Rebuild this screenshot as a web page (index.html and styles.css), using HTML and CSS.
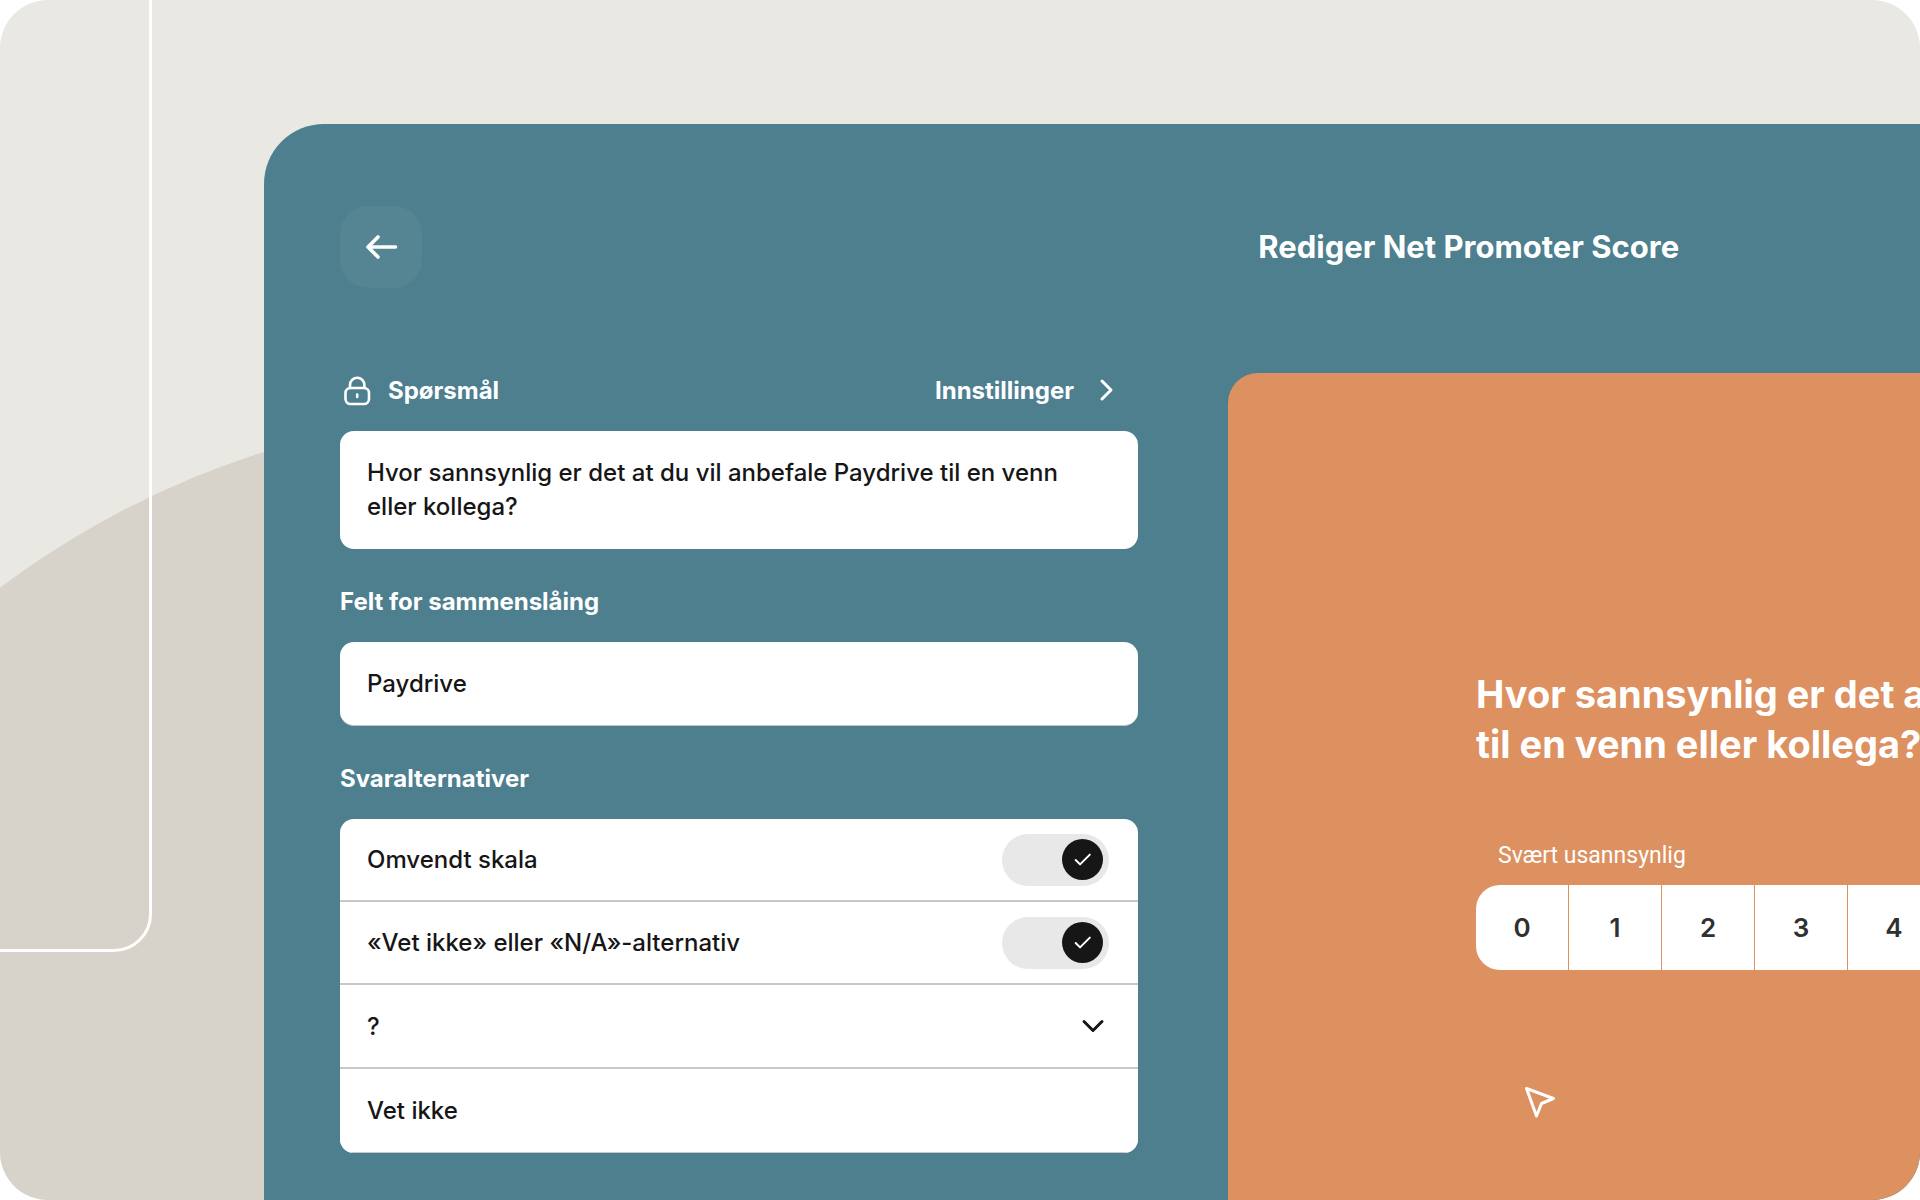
FILE: index.html
```html
<!DOCTYPE html>
<html lang="nb">
<head>
  <meta charset="UTF-8" />
  <meta name="viewport" content="width=device-width, initial-scale=1.0"/>
  <title>Rediger Net Promoter Score</title>
  <link rel="stylesheet" href="styles.css">
</head>
<body>
  <main class="stage">
    <div class="circle"></div>
    <div class="outline"></div>

    <section class="editor">
      <header class="editor-header">
        <button type="button" class="back-btn" aria-label="Tilbake">
          <svg width="36" height="36" viewBox="0 0 36 36" fill="none" stroke="#fff" stroke-width="3.6" stroke-linecap="round" stroke-linejoin="round">
            <path d="M32.500 18H5M15 8L5 18L15 28" />
          </svg>
        </button>
        <h1>Rediger Net Promoter Score</h1>
      </header>

      <div class="editor-body">
        <form class="form">
          <div class="label-row">
            <svg class="lock" width="34" height="34" viewBox="0 0 34 34" fill="none" stroke="#fff" stroke-width="2.6" stroke-linecap="round" stroke-linejoin="round">
              <rect x="5.500" y="15" width="23.500" height="16" rx="5" />
              <path d="M10 15V12A7.200 7.200 0 0 1 24.400 12V15" />
              <path d="M17.200 21.500V24" />
            </svg>
            <label for="question">Spørsmål</label>
            <button type="button" class="settings-btn">
              Innstillinger
              <svg width="24" height="24" viewBox="0 0 24 24" fill="none" stroke="#fff" stroke-width="3" stroke-linecap="round" stroke-linejoin="round">
                <path d="M8 3L17 12L8 21" />
              </svg>
            </button>
          </div>
          <textarea id="question" class="field question" rows="2">Hvor sannsynlig er det at du vil anbefale Paydrive til en venn eller kollega?</textarea>

          <div class="label-row">
            <label for="merge">Felt for sammenslåing</label>
          </div>
          <input type="text" id="merge" class="field merge" value="Paydrive" />

          <div class="label-row">
            <h2>Svaralternativer</h2>
          </div>
          <div class="options">
            <div class="option">
              <label for="reverse">Omvendt skala</label>
              <span class="toggle">
                <input type="checkbox" id="reverse" checked />
                <svg width="41" height="41" viewBox="0 0 42 42" fill="none">
                  <circle cx="21" cy="21" r="21" fill="#161616" />
                  <path d="M14 21.500L18.500 26L28.500 16" stroke="#fff" stroke-width="2" stroke-linecap="round" stroke-linejoin="round" />
                </svg>
              </span>
            </div>
            <div class="option">
              <label for="unsure">«Vet ikke» eller «N/A»-alternativ</label>
              <span class="toggle">
                <input type="checkbox" id="unsure" checked />
                <svg width="41" height="41" viewBox="0 0 42 42" fill="none">
                  <circle cx="21" cy="21" r="21" fill="#161616" />
                  <path d="M14 21.500L18.500 26L28.500 16" stroke="#fff" stroke-width="2" stroke-linecap="round" stroke-linejoin="round" />
                </svg>
              </span>
            </div>
            <div class="option select-option">
              <select aria-label="Symbol">
                <option>?</option>
              </select>
              <svg width="24" height="24" viewBox="0 0 24 24" fill="none" stroke="#161616" stroke-width="3" stroke-linecap="round" stroke-linejoin="round">
                <path d="M3 7.500L12 16.500L21 7.500" />
              </svg>
            </div>
            <input type="text" class="option text-option" value="Vet ikke" aria-label="Alternativ" />
          </div>
        </form>

        <section class="preview">
          <h2 class="preview-title">Hvor sannsynlig er det at du vil anbefale Paydrive<br>til en venn eller kollega?</h2>
          <p class="scale-label">Svært usannsynlig</p>
          <div class="scale">
            <button type="button">0</button>
            <button type="button">1</button>
            <button type="button">2</button>
            <button type="button">3</button>
            <button type="button">4</button>
            <button type="button">5</button>
            <button type="button">6</button>
            <button type="button">7</button>
            <button type="button">8</button>
            <button type="button">9</button>
            <button type="button">10</button>
          </div>
          <svg class="cursor" width="34" height="34" viewBox="0 0 34 34" fill="none" stroke="#fff" stroke-width="3" stroke-linecap="round" stroke-linejoin="round">
            <path d="M2.500 2.500L29.500 12.500L17.500 17.500L12.500 30Z" />
          </svg>
        </section>
      </div>
    </section>
  </main>
</body>
</html>
```
FILE: styles.css
```css
* {
  box-sizing: border-box;
}

body {
  font-family: Inter, sans-serif;
  margin: 0;
  background: #fff;
  color: #161616;
  font-size: 24px;
  font-weight: 500;
}

h1, h2, p {
  margin: 0;
}

button, input, select, textarea {
  font: inherit;
  color: inherit;
}

button {
  border: none;
  cursor: pointer;
}

.stage {
  position: relative;
  display: flex;
  min-height: 100vh;
  padding: 124px 0 0 264px;
  background: #e9e8e3;
  border-radius: 48px;
  overflow: hidden;
}

/* background shapes */
.circle {
  position: absolute;
  left: -351px;
  top: 411px;
  width: 1760px;
  height: 1760px;
  border-radius: 50%;
  background: #d7d3cb;
}

.outline {
  position: absolute;
  left: -50px;
  top: -50px;
  width: 202px;
  height: 1002px;
  border: 3px solid #fff;
  border-radius: 38px;
}

/* the editor runs out past the right edge */
.editor {
  position: relative;
  flex: none;
  display: flex;
  flex-direction: column;
  width: 145.5%;
  padding: 82px 76px 0;
  background: #4d7f8f;
  border-radius: 60px 60px 0 0;
}

.editor-header {
  display: grid;
  grid-template-columns: 1fr auto 1fr;
  align-items: center;
  margin-bottom: 85px;
  color: #fff;
}

.editor-header h1 {
  font-size: 31px;
  line-height: 40px;
  font-weight: 700;
}

.back-btn {
  display: flex;
  align-items: center;
  justify-content: center;
  width: 82px;
  height: 82px;
  padding: 0;
  border-radius: 28px;
  background: #558593;
}

.editor-body {
  flex: 1;
  display: flex;
  gap: 90px;
}

.form {
  flex: none;
  width: 798px;
  padding-bottom: 47px;
}

.label-row {
  display: flex;
  align-items: center;
  height: 34px;
  margin: 35px 0 24px;
  color: #fff;
  font-weight: 700;
}

.label-row:first-child {
  margin-top: 0;
}

.label-row h2 {
  font-size: 24px;
  font-weight: 700;
}

.lock {
  margin-right: 14px;
}

.settings-btn {
  display: flex;
  align-items: center;
  gap: 20px;
  margin-left: auto;
  padding: 0 20px 0 0;
  background: none;
  color: #fff;
}

.field {
  display: block;
  width: 100%;
  padding: 25px 27px;
  border: none;
  border-radius: 14px;
  background: #fff;
  line-height: 34px;
}

.question {
  padding-right: 48px;
  resize: none;
  overflow: hidden;
}

.merge {
  border-bottom: 1px solid #c4c4c4;
  padding-bottom: 24px;
}

.options {
  border-radius: 14px;
  background: #fff;
  overflow: hidden;
}

.option {
  display: flex;
  align-items: center;
  justify-content: space-between;
  width: 100%;
  height: 83px;
  padding: 0 29px 0 27px;
  border: none;
  border-bottom: 2px solid #c8c8c8;
}

.select-option,
.text-option {
  height: 84px;
}

.text-option {
  border-bottom-width: 1px;
}

.toggle {
  display: grid;
  align-items: center;
}

.toggle input,
.toggle svg {
  grid-area: 1 / 1;
}

.toggle input {
  appearance: none;
  width: 107px;
  height: 52px;
  margin: 0;
  border-radius: 26px;
  background: #e8e8e8;
}

.toggle svg {
  justify-self: end;
  margin-right: 6px;
  pointer-events: none;
  z-index: 1;
}

.select-option {
  display: grid;
  grid-template-columns: 1fr;
  padding: 0;
}

.select-option select,
.select-option svg {
  grid-area: 1 / 1;
}

.select-option select {
  appearance: none;
  width: 100%;
  height: 82px;
  padding: 0 27px;
  border: none;
  background: #fff;
}

.select-option svg {
  justify-self: end;
  margin-right: 33px;
  pointer-events: none;
}

.preview {
  position: relative;
  flex: 1;
  padding: 296px 0 0 248px;
  background: #dd9060;
  border-radius: 30px 30px 0 0;
  color: #fff;
}

.preview-title {
  font-size: 38px;
  line-height: 50px;
  font-weight: 700;
  white-space: nowrap;
}

.scale-label {
  margin: 72px 0 14px;
  padding-left: 22px;
  font-family: Roboto, sans-serif;
  font-size: 23px;
  font-weight: 400;
  line-height: 30px;
}

.scale {
  display: flex;
  gap: 1px;
}

.scale button {
  flex: none;
  width: 92px;
  height: 85px;
  padding: 0;
  background: #fff;
  color: #303030;
  font-size: 26px;
  font-weight: 600;
}

.scale button:first-child {
  border-radius: 24px 0 0 24px;
}

.scale button:last-child {
  border-radius: 0 24px 24px 0;
}

.cursor {
  position: absolute;
  left: 296px;
  top: 713px;
}
```
